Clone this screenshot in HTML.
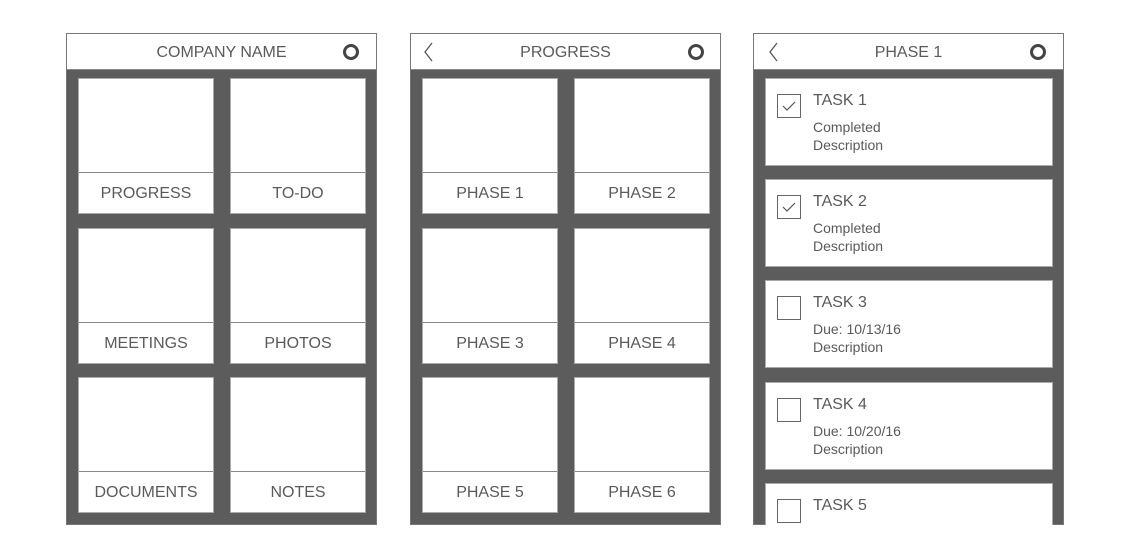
<!DOCTYPE html>
<html><head><style>
body{margin:0;width:1131px;height:559px;background:#fff;position:relative;overflow:hidden;font-family:"Liberation Sans",Arial,sans-serif;color:#5a5a5a}
.p{position:absolute;top:33px;width:311px;height:492px;background:#5c5c5c;box-sizing:border-box;border:1px solid #777}
.h{position:absolute;left:0;top:0;right:0;height:35px;background:#fff;border-bottom:1px solid #888;text-align:center;line-height:38px;font-size:16px}
.t{position:absolute;width:136px;height:136px;background:#fff;border:1px solid #aaa;box-sizing:border-box}
.t span{position:absolute;left:0;right:0;bottom:0;height:40px;border-top:1px solid #888;text-align:center;line-height:41px;font-size:16px;white-space:nowrap}
.c{position:absolute;left:11px;width:288px;height:88px;background:#fff;border:1px solid #aaa;box-sizing:border-box;overflow:hidden}
.c .b{position:absolute;left:11px;top:15px;width:22px;height:22px;border:1px solid #666}
.c .n{position:absolute;left:47px;top:13px;font-size:16px}
.c .d{position:absolute;left:47px;top:39px;font-size:14px;line-height:18px}
svg{position:absolute}
</style></head><body>
<div class="p" style="left:66px">
<div class="h">COMPANY NAME</div>
<svg style="left:275px;top:9px" width="18" height="18"><circle cx="9" cy="9" r="6.5" fill="none" stroke="#444" stroke-width="3"/></svg>
<div class="t" style="left:11px;top:44px"><span>PROGRESS</span></div>
<div class="t" style="left:163px;top:44px"><span>TO-DO</span></div>
<div class="t" style="left:11px;top:194px"><span>MEETINGS</span></div>
<div class="t" style="left:163px;top:194px"><span>PHOTOS</span></div>
<div class="t" style="left:11px;top:343px"><span>DOCUMENTS</span></div>
<div class="t" style="left:163px;top:343px"><span>NOTES</span></div>
</div>
<div class="p" style="left:410px">
<div class="h">PROGRESS</div>
<svg style="left:11px;top:7px" width="14" height="22"><path d="M10 2 L3 11 L10 20" fill="none" stroke="#555" stroke-width="1.3"/></svg>
<svg style="left:276px;top:9px" width="18" height="18"><circle cx="9" cy="9" r="6.5" fill="none" stroke="#444" stroke-width="3"/></svg>
<div class="t" style="left:11px;top:44px"><span>PHASE 1</span></div>
<div class="t" style="left:163px;top:44px"><span>PHASE 2</span></div>
<div class="t" style="left:11px;top:194px"><span>PHASE 3</span></div>
<div class="t" style="left:163px;top:194px"><span>PHASE 4</span></div>
<div class="t" style="left:11px;top:343px"><span>PHASE 5</span></div>
<div class="t" style="left:163px;top:343px"><span>PHASE 6</span></div>
</div>
<div class="p" style="left:753px">
<div class="h">PHASE 1</div>
<svg style="left:13px;top:7px" width="14" height="22"><path d="M10 2 L3 11 L10 20" fill="none" stroke="#555" stroke-width="1.3"/></svg>
<svg style="left:275px;top:9px" width="18" height="18"><circle cx="9" cy="9" r="6.5" fill="none" stroke="#444" stroke-width="3"/></svg>
<div class="c" style="top:44px"><div class="b"><svg style="left:4px;top:5px" width="14" height="12"><path d="M1 6 L5 10 L13 2" fill="none" stroke="#555" stroke-width="1.2"/></svg></div><div class="n">TASK 1</div><div class="d">Completed<br>Description</div></div>
<div class="c" style="top:145px"><div class="b"><svg style="left:4px;top:5px" width="14" height="12"><path d="M1 6 L5 10 L13 2" fill="none" stroke="#555" stroke-width="1.2"/></svg></div><div class="n">TASK 2</div><div class="d">Completed<br>Description</div></div>
<div class="c" style="top:246px"><div class="b"></div><div class="n">TASK 3</div><div class="d">Due: 10/13/16<br>Description</div></div>
<div class="c" style="top:348px"><div class="b"></div><div class="n">TASK 4</div><div class="d">Due: 10/20/16<br>Description</div></div>
<div class="c" style="top:449px;height:42px;border-bottom:none"><div class="b"></div><div class="n">TASK 5</div></div>
</div>
</body></html>
